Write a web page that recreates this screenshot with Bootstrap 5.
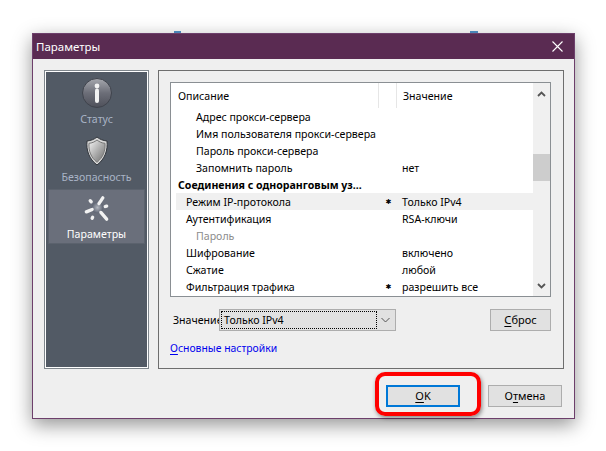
<!DOCTYPE html>
<html lang="ru">
<head>
  <meta charset="UTF-8">
  <title>Параметры</title>
  <link href="https://cdn.jsdelivr.net/npm/bootstrap@5.3.0/dist/css/bootstrap.min.css" rel="stylesheet">
  <style>
    html, body { height: 451px; overflow: hidden; background: #fff; }
    body { font-family: "Noto Sans", "Liberation Sans", sans-serif; font-size: 10.6px; line-height: 17px; color: #000; padding: 33px 0 0 32px; }
    .dlg { width: 543px; height: 386px; border: 1px solid #6d3f6b; background: #efefef; box-shadow: 0 6px 18px rgba(0,0,0,.42); position: relative; }
    .dlg-title { height: 25px; background: #5a2b52; color: #fff; font-size: 11.5px; padding: 0 11px 0 3px; }
    .dlg-main { height: 299px; margin: 11px 10px 0 11px; gap: 9px; }
    .side { width: 105px; border: 1px solid #7f868c; box-shadow: inset 0 0 0 1px #fff; background: #525a65; padding: 5px 3px; }
    .side-item { height: 55px; color: #a9b4c6; padding-top: 1px; }
    .side-item:first-child { margin-bottom: 3px; }
    .side-item.active { background: #6a6f7b; color: #fff; border: 1px solid #5b626d; padding-top: 3px; }
    .side-item svg { display: block; margin-bottom: 2px; }
    .frame { width: 406px; border: 1px solid #6e6e6e; padding: 11px 12px 0 11px; }
    .listbox { height: 215px; border: 1px solid #8a8f93; background: #fff; }
    .list-body { width: 362px; padding-left: 5px; }
    .list-head { height: 25px; padding-left: 2px; }
    .head-a { width: 201px; border-right: 1px solid #e6e6e6; padding-top: 2px; }
    .head-b { width: 18px; border-right: 1px solid #e6e6e6; }
    .head-c { padding: 2px 0 0 6px; }
    .list-rows { height: 188px; overflow: hidden; }
    .item-row { height: 17px; }
    .item-row.hl { background: #f0f0f0; }
    .name, .star, .val { padding-top: 1px; }
    .name { width: 201px; white-space: nowrap; }
    .lvl0 { padding-left: 2px; font-weight: 700; }
    .lvl1 { padding-left: 10px; }
    .lvl2 { padding-left: 20px; }
    .muted-name { color: #8c8c8c; }
    .star { width: 23px; text-align: center; font-family: "DejaVu Sans", sans-serif; font-size: 7px; }
    .val { padding-left: 2px; white-space: nowrap; }
    .vscroll { width: 17px; background: #f0f0f0; }
    .vscroll-btn { height: 21px; }
    .thumb { height: 27px; background: #cdcdcd; margin-top: 50px; }
    .value-row { margin-top: 12px; height: 22px; }
    .value-label { width: 46px; white-space: nowrap; margin-left: 3px; }
    .combo { width: 177px; height: 22px; background: #e1e1e1; border: 1px solid #adadad; padding: 1px; }
    .combo-text { flex: 1; border: 1px dotted #000; padding: 0 2px; line-height: 16px; }
    .combo-arrow { width: 17px; }
    .flat-btn { height: 22px; width: 61px; background: #e1e1e1; border: 1px solid #adadad; padding: 0; font-size: 11px; line-height: 18px; color: #000; border-radius: 0; }
    .flat-btn.wide { width: 74px; }
    .flat-btn.focused { border: 2px solid #0078d7; }
    .nav-link-text { margin-top: 9px; color: #0000ee; font-size: 10.4px; }
    .dlg-foot { margin: 16px 12px 0 0; gap: 28px; }
    .red-mark { position: absolute; left: 342px; top: 338px; width: 106px; height: 44px; border: 4px solid #f00; border-radius: 10px; box-shadow: 1px 2px 4px rgba(0,0,0,.45); }
    .peek { position: absolute; top: -3px; height: 2px; background: #4a86b8; }
    .peek-a { left: 141px; width: 7px; }
    .peek-b { left: 437px; width: 8px; }
    u { text-decoration-thickness: 1px; text-underline-offset: 2px; }
  </style>
</head>
<body>
  <div class="dlg">
    <span class="peek peek-a"></span>
    <span class="peek peek-b"></span>
    <div class="dlg-title d-flex align-items-center justify-content-between">
      <span>Параметры</span>
      <svg width="11" height="11" viewBox="0 0 11 11"><path d="M.5.5l10 10M10.500.5l-10 10" stroke="#fff" stroke-width="1.100" fill="none"/></svg>
    </div>

    <div class="dlg-main d-flex">
      <div class="side">
        <div class="side-item d-flex flex-column align-items-center">
          <svg width="32" height="32" viewBox="0 0 32 32">
            <defs>
              <linearGradient id="disc" x1="0" y1="0" x2="0" y2="1"><stop offset="0" stop-color="#a6a8ae"/><stop offset=".5" stop-color="#6c6e78"/><stop offset="1" stop-color="#4e505a"/></linearGradient>
              <linearGradient id="sh" x1="0" y1="0" x2="1" y2="1"><stop offset="0" stop-color="#f4f4f4"/><stop offset=".55" stop-color="#a8a8a8"/><stop offset="1" stop-color="#6c6c6c"/></linearGradient>
              <radialGradient id="hub"><stop offset="0" stop-color="#b4b8c0"/><stop offset="1" stop-color="#5c6270"/></radialGradient>
            </defs>
            <circle cx="16" cy="16" r="14.500" fill="url(#disc)" stroke="#3f434c"/>
            <circle cx="16" cy="9" r="2.400" fill="#f2f2f2"/>
            <path d="M16 13.500V24" stroke="#f2f2f2" stroke-width="4" stroke-linecap="round"/>
          </svg>
          <span>Статус</span>
        </div>
        <div class="side-item d-flex flex-column align-items-center">
          <svg width="32" height="32" viewBox="0 0 32 32">
            <path d="M16 2c3 2.500 6 3.500 10 4 1 9-2 18-10 24C8 24 5 15 6 6c4-.500 7-1.500 10-4z" fill="#d8d8d8" stroke="#30343a"/>
            <path d="M16 5c2.500 2 5 3 8 3.300.500 8-2 14-8 19-6-5-8.500-11-8-19 3-.300 5.500-1.300 8-3.300z" fill="url(#sh)" stroke="#777"/>
          </svg>
          <span>Безопасность</span>
        </div>
        <div class="side-item active d-flex flex-column align-items-center">
          <svg width="32" height="32" viewBox="0 0 32 32">
            <circle cx="16.500" cy="15" r="6" fill="url(#hub)"/>
            <g stroke="#f2f2f2" stroke-width="3.400" stroke-linecap="round">
              <path d="M18 11L22 5"/><path d="M11 17L5 19.500"/><path d="M20 20L26 27"/>
              <path d="M9 8L10 9"/><path d="M26 13.500L24.500 14"/><path d="M11 26L11.500 25"/>
            </g>
          </svg>
          <span>Параметры</span>
        </div>
      </div>

      <div class="frame">
        <div class="listbox d-flex">
          <div class="list-body">
            <div class="list-head d-flex align-items-center">
              <div class="head-a align-self-stretch d-flex align-items-center">Описание</div>
              <div class="head-b align-self-stretch"></div>
              <div class="head-c">Значение</div>
            </div>
            <div class="list-rows" id="rows"></div>
          </div>
          <div class="vscroll d-flex flex-column">
            <div class="vscroll-btn d-flex align-items-center justify-content-center">
              <svg width="9" height="6" viewBox="0 0 9 6"><path d="M1 5l3.500-3.500L8 5" stroke="#555" stroke-width="1.800" fill="none"/></svg>
            </div>
            <div class="thumb"></div>
            <div class="flex-grow-1"></div>
            <div class="vscroll-btn d-flex align-items-center justify-content-center">
              <svg width="9" height="6" viewBox="0 0 9 6"><path d="M1 1l3.500 3.500L8 1" stroke="#555" stroke-width="1.800" fill="none"/></svg>
            </div>
          </div>
        </div>

        <div class="value-row d-flex align-items-center">
          <div class="value-label">Значение</div>
          <div class="combo d-flex">
            <div class="combo-text">Только IPv4</div>
            <div class="combo-arrow d-flex align-items-center justify-content-center">
              <svg width="9" height="6" viewBox="0 0 9 6"><path d="M.5 1l4 4 4-4" stroke="#555" fill="none"/></svg>
            </div>
          </div>
          <div class="flex-grow-1"></div>
          <button class="flat-btn" type="button"><u>С</u>брос</button>
        </div>
        <div class="nav-link-text"><u>О</u>сновные настройки</div>
      </div>
    </div>

    <div class="dlg-foot d-flex justify-content-end">
      <button class="flat-btn wide focused" type="button"><u>O</u>K</button>
      <button class="flat-btn wide" type="button">О<u>т</u>мена</button>
    </div>

    <div class="red-mark"></div>
  </div>

  <script>
    const rows = [
      ["Адрес прокси-сервера", 2, "", ""],
      ["Имя пользователя прокси-сервера", 2, "", ""],
      ["Пароль прокси-сервера", 2, "", ""],
      ["Запомнить пароль", 2, "", "нет"],
      ["Соединения с одноранговым уз...", 0, "", ""],
      ["Режим IP-протокола", 1, "✱", "Только IPv4", "hl"],
      ["Аутентификация", 1, "", "RSA-ключи"],
      ["Пароль", 2, "", "", "muted-name"],
      ["Шифрование", 1, "", "включено"],
      ["Сжатие", 1, "", "любой"],
      ["Фильтрация трафика", 1, "✱", "разрешить все"]
    ];
    const list = document.getElementById("rows");
    rows.forEach(r => {
      const row = document.createElement("div");
      row.className = "item-row d-flex " + (r[4] === "hl" ? "hl" : "");
      const name = document.createElement("div");
      name.className = "name lvl" + r[1] + (r[4] === "muted-name" ? " muted-name" : "");
      name.innerText = r[0];
      const star = document.createElement("div");
      star.className = "star";
      star.innerText = r[2];
      const val = document.createElement("div");
      val.className = "val";
      val.innerText = r[3];
      row.append(name, star, val);
      list.appendChild(row);
    });
  </script>
  <script src="https://cdn.jsdelivr.net/npm/bootstrap@5.3.0/dist/js/bootstrap.bundle.min.js"></script>
</body>
</html>
